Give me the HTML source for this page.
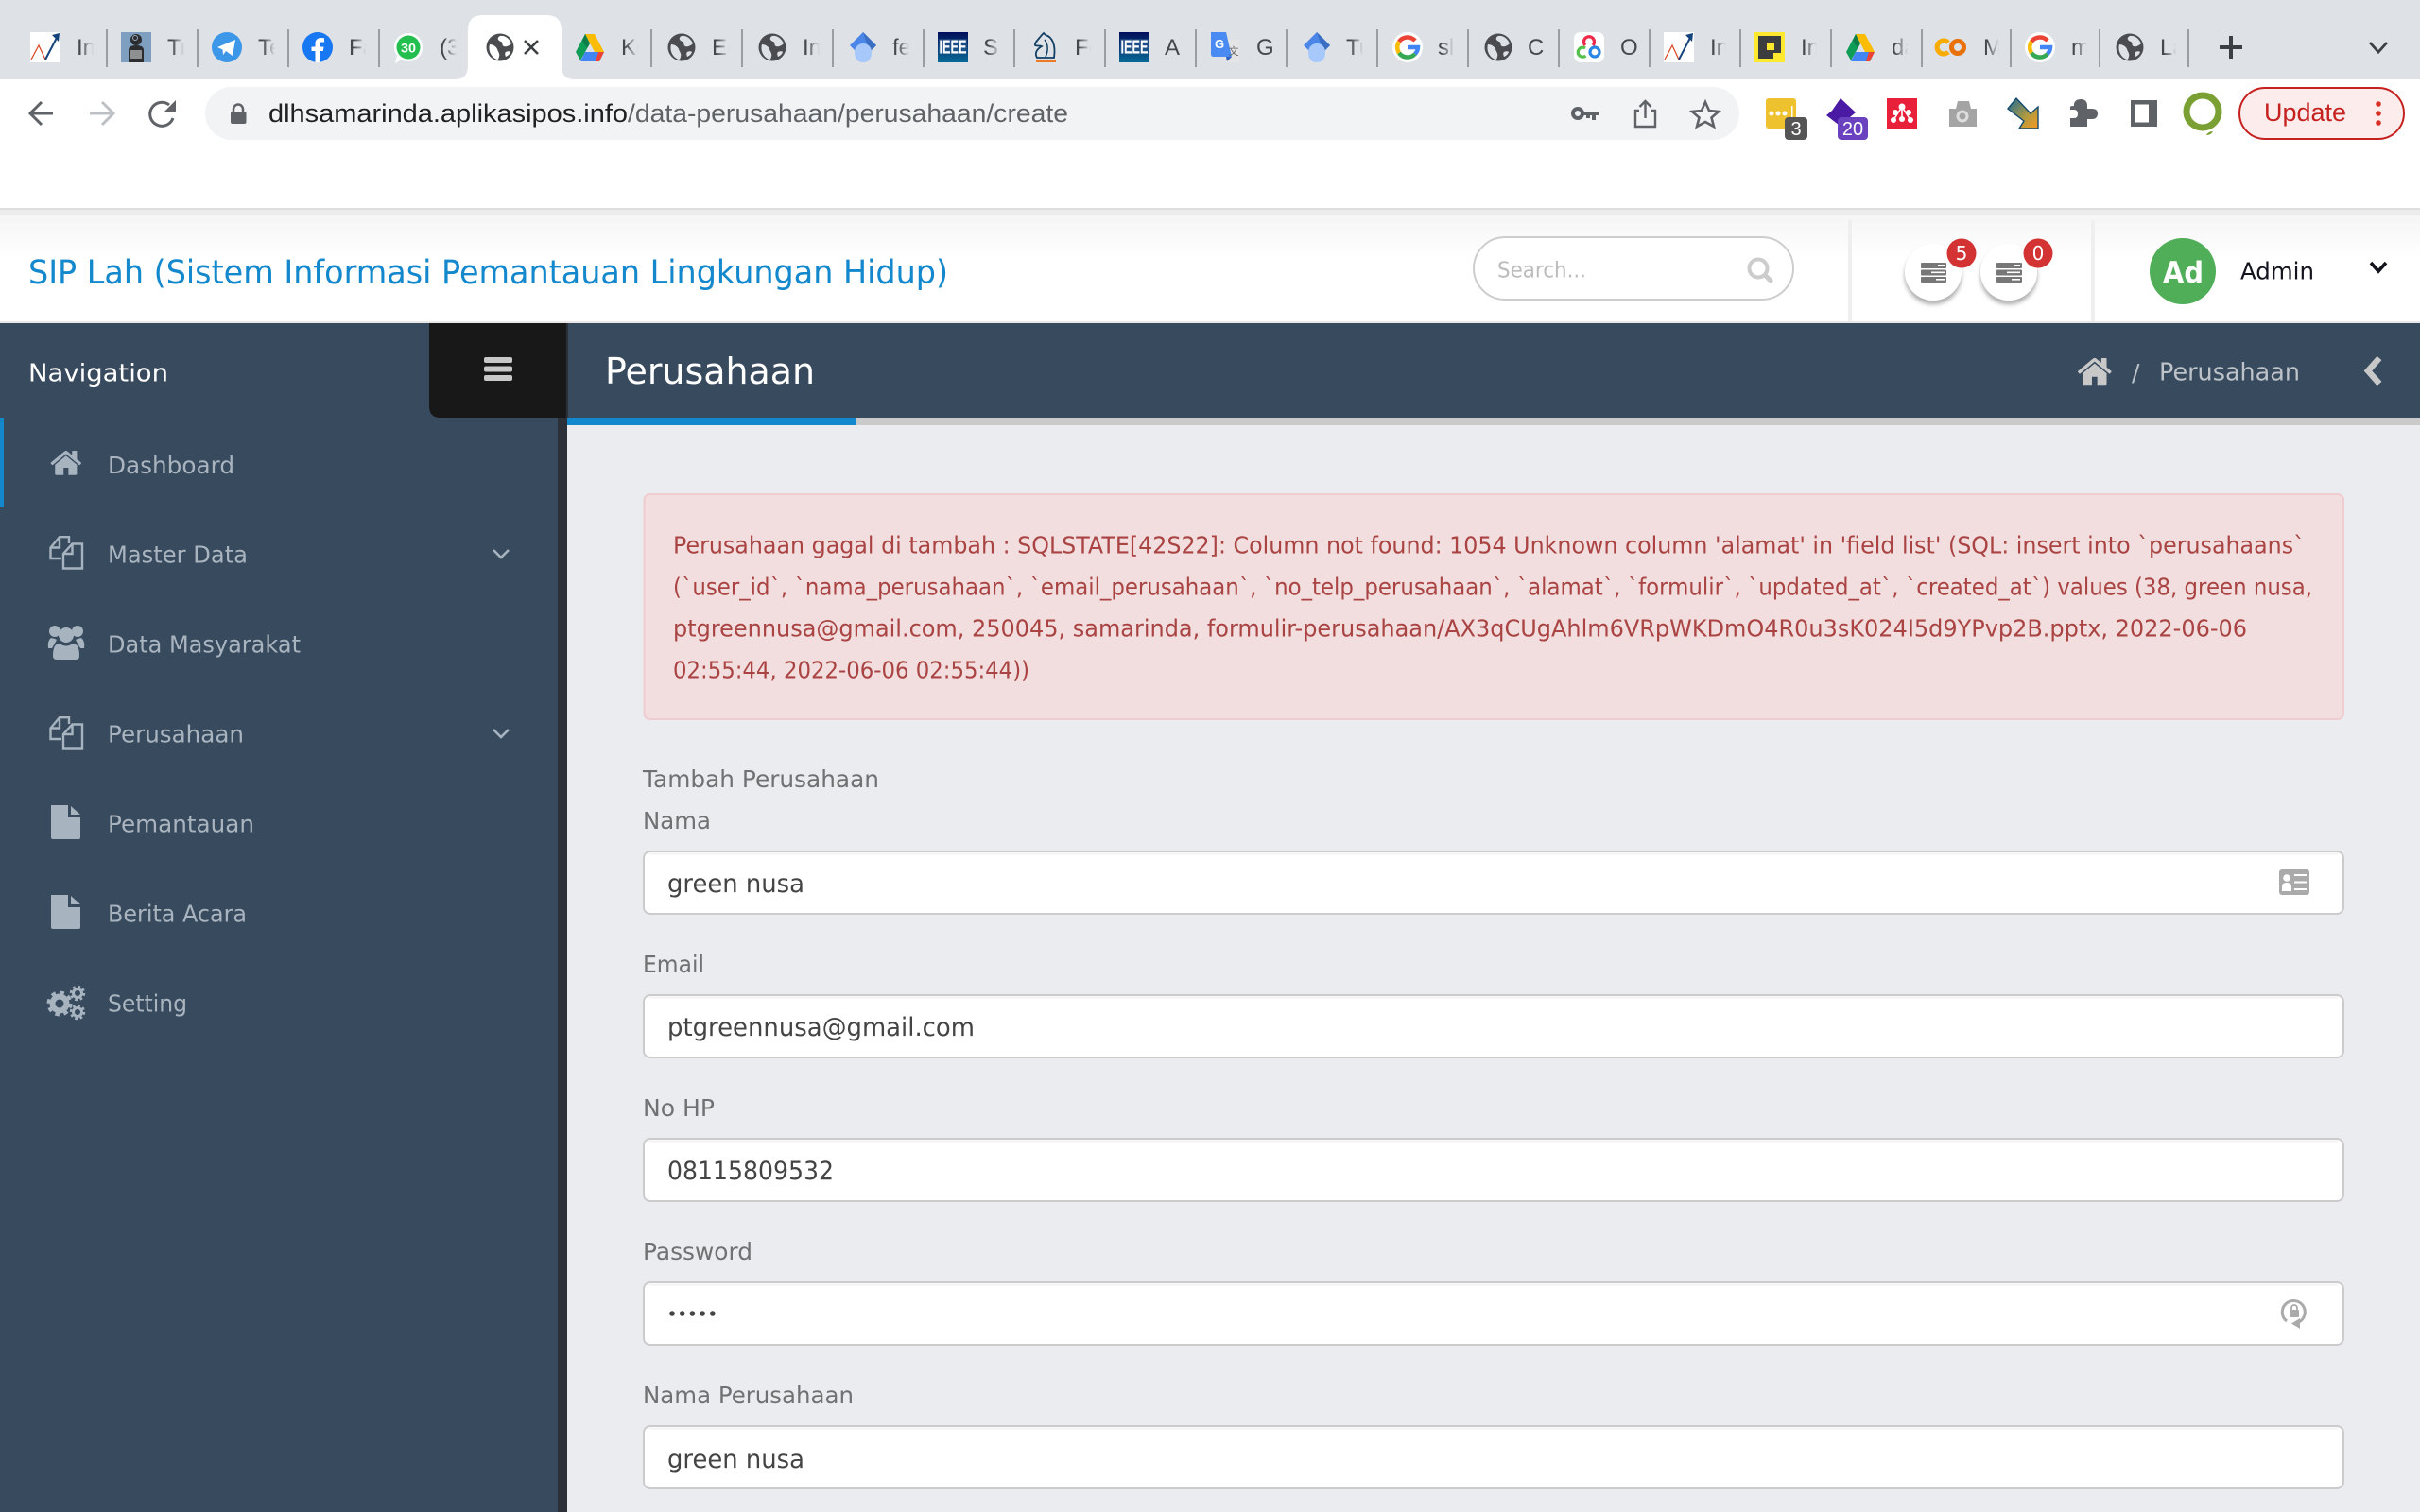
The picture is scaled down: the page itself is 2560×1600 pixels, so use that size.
<!DOCTYPE html>
<html lang="id"><head><meta charset="utf-8"><title>SIP Lah</title>
<style>html,body{margin:0;padding:0;background:#ebecf0;overflow:hidden}svg{display:block}
.c{font-family:"Liberation Sans",sans-serif}
.p{font-family:"DejaVu Sans","Liberation Sans",sans-serif}
.t{font-family:"Liberation Sans",sans-serif;font-size:24px;fill:#45494e}
.n{font-family:"DejaVu Sans","Liberation Sans",sans-serif;font-size:24.5px;fill:#a9b4bf}
.l{font-family:"DejaVu Sans","Liberation Sans",sans-serif;font-size:25px;fill:#707172}
.v{font-family:"DejaVu Sans","Liberation Sans",sans-serif;font-size:27px;fill:#444}
.e{font-family:"DejaVu Sans","Liberation Sans",sans-serif;font-size:25px;fill:#a94442}
</style></head><body>
<svg xmlns="http://www.w3.org/2000/svg" width="2560" height="1600" viewBox="0 0 2560 1600">
<defs>
<linearGradient id="hg" x1="0" y1="0" x2="0" y2="1"><stop offset="0" stop-color="#f5f5f5"/><stop offset="1" stop-color="#fff"/></linearGradient>
<linearGradient id="fade" x1="0" y1="0" x2="1" y2="0"><stop offset="0" stop-color="#dee1e6" stop-opacity="0"/><stop offset=".5" stop-color="#dee1e6"/><stop offset="1" stop-color="#dee1e6"/></linearGradient>
<linearGradient id="ie" x1="0" y1="0" x2="0" y2="1"><stop offset="0" stop-color="#020f5a"/><stop offset="1" stop-color="#0a6a96"/></linearGradient>
<linearGradient id="ar" x1="0" y1="0" x2="1" y2="1"><stop offset="0" stop-color="#1b6a96"/><stop offset=".6" stop-color="#b09a40"/><stop offset="1" stop-color="#f79a20"/></linearGradient>
<filter id="sh" x="-30%" y="-30%" width="160%" height="170%"><feDropShadow dx="0" dy="4" stdDeviation="2.5" flood-color="#888" flood-opacity=".7"/></filter>
<g id="globe"><circle cx="15" cy="16" r="14.5" fill="#4a4c50"/><path d="M15 4C11 6 13 9 16 10C19 11 16 14 19 15C22 16 25 14 27 12C25 7 20 3 15 4Z M4 13C7 13 11 15 12 18C13 21 15 23 14 26C13.5 28 13 29 12 29C6 27 2 20 4 13Z" fill="#dee1e6"/><path d="M21 21C23 20 25 20 26 21C25 24 23 25 21 26C20 24 20 22 21 21Z" fill="#dee1e6"/></g>
<g id="chart"><rect width="32" height="32" fill="#fff"/><path d="M1 29L9 14L16 29" fill="none" stroke="#d9451f" stroke-width="1.2"/><path d="M16 29L29 4" fill="none" stroke="#15437c" stroke-width="2"/><path d="M23 3L31 1L30 10Z" fill="#15437c"/></g>
<g id="ml"><rect width="32" height="32" fill="#7e9fbf"/><circle cx="16" cy="8" r="6" fill="#2b2d30"/><path d="M8 32V19Q8 14 16 14Q24 14 24 19V32Z" fill="#2b2d30"/><circle cx="15" cy="6" r="2.5" fill="none" stroke="#9ab" stroke-width="1"/><rect x="10" y="19" width="12" height="9" fill="#bbb" opacity=".7"/></g>
<g id="tg"><circle cx="16" cy="16" r="16" fill="#3d97e8"/><path d="M6 16L25 8L22 25L15 20L12 24L11.5 18.5Z" fill="#fff"/></g>
<g id="fb"><circle cx="16" cy="16" r="16" fill="#1877f2"/><path d="M13.5 32V20H9.5V15.5H13.5V12C13.5 8 16 6 19.5 6L23 6.3V10.5H20.5C18.5 10.500 18 11.5 18 13V15.5H22.5L21.8 20H18V32Z" fill="#fff"/></g>
<g id="wa"><path d="M1 32L3 24Q0 20 0 15C0 6 7 0 15 0S30 6 30 15S23 30 15 30Q11 30 8 28Z" fill="#fff"/><circle cx="15" cy="15" r="12.5" fill="#23bf4e"/><text x="15" y="20.5" text-anchor="middle" font-family="Liberation Sans" font-weight="700" font-size="14" fill="#fff" textLength="16" lengthAdjust="spacingAndGlyphs">30</text></g>
<g id="drive"><path d="M10 1H20L30 20H20Z" fill="#fbbc04"/><path d="M10 1L0 20L5 29L15 11Z" fill="#0f9d58"/><path d="M10 1L15 11L12 16L7 8Z" fill="#0f7d48"/><path d="M5 30L10 20H30L25 30Z" fill="#4285f4"/><path d="M25 30L30 20H24L21 30Z" fill="#ea4335"/></g>
<g id="dia"><path d="M15 0L29 14L15 28L1 14Z" fill="#4a86e8"/><path d="M15 0L29 14L22 21Z" fill="#3a6fc4"/><path d="M6 21A9 9 0 0 1 24 21Q24 32 15 32Q6 32 6 21Z" fill="#a7c8fb"/></g>
<g id="ieee"><rect width="32" height="32" fill="url(#ie)"/><rect x="1" y="7" width="30" height="16" fill="#2e5f96" opacity=".55"/><text x="16" y="22.5" text-anchor="middle" font-family="Liberation Sans" font-weight="700" font-size="20" fill="#fff" textLength="29" lengthAdjust="spacingAndGlyphs">IEEE</text></g>
<g id="horse"><path d="M6 27C3 22 6 18 11 15C9 14 6 15 4 14C3 11 9 6 11 3L13 1L15 3C22 5 26 13 24 27Z" fill="none" stroke="#123f63" stroke-width="1.8"/><path d="M14 8C18 13 18 20 15 26" fill="none" stroke="#123f63" stroke-width="1.5"/><rect x="5" y="29" width="21" height="3" fill="#ec7a26"/></g>
<g id="gt"><path d="M14 8H30V32H14Z" fill="#e5e5e5"/><path d="M0 0H16L22 26H3Q0 26 0 23Z" fill="#4a8af3"/><path d="M16 26H22L17 31Z" fill="#2b5fc0"/><text x="9" y="17" text-anchor="middle" font-family="Liberation Sans" font-weight="700" font-size="13" fill="#fff">G</text><text x="24" y="24" text-anchor="middle" font-family="Noto Sans CJK SC,sans-serif" font-size="11" fill="#666">文</text></g>
<g id="goog"><circle cx="16" cy="16" r="16" fill="#fff"/><path d="M24 9A11 11 0 0 0 7 10" fill="none" stroke="#ea4335" stroke-width="4.5"/><path d="M7 10A11 11 0 0 0 7 22" fill="none" stroke="#fbbc05" stroke-width="4.5"/><path d="M7 22A11 11 0 0 0 24 23" fill="none" stroke="#34a853" stroke-width="4.5"/><path d="M24 23A11 11 0 0 0 27 16H16" fill="none" stroke="#4285f4" stroke-width="4.5"/></g>
<g id="cvs"><rect width="32" height="32" rx="7" fill="#fff"/><path d="M12 14A5.5 5.5 0 1 1 20 14" fill="none" stroke="#ee2a4a" stroke-width="3.2"/><path d="M13 17A5 5 0 1 0 13.5 25" fill="none" stroke="#55c14a" stroke-width="3.2" transform="translate(-1,0)"/><circle cx="22" cy="21" r="5" fill="none" stroke="#2a86e6" stroke-width="3.2"/></g>
<g id="yel"><rect width="32" height="32" fill="#ffe92e"/><path d="M4 4H28V22H20V28H4Z" fill="#3b3d3f"/><rect x="13" y="11" width="8" height="8" fill="#ffe92e"/></g>
<g id="co"><path d="M14 11A7 7 0 1 0 14 21" fill="none" stroke="#f9ab00" stroke-width="5"/><circle cx="24" cy="16" r="6.5" fill="none" stroke="#e8710a" stroke-width="5"/></g>
<path id="fah" d="M1472 992v480q0 26-19 45t-45 19h-384v-384h-256v384h-384q-26 0-45-19t-19-45v-480q0-1 .5-3t.5-3l575-474 575 474q1 2 1 6zm223-69l-62 74q-8 9-21 11h-3q-13 0-21-7l-692-577-692 577q-12 8-24 7-13-2-21-11l-62-74q-8-10-7-23.5t11-21.5l719-599q32-26 76-26t76 26l244 204v-195q0-14 9-23t23-9h192q14 0 23 9t9 23v408l219 182q10 8 11 21.5t-7 23.5z"/>
<g id="files" fill="none" stroke="#a7b3bf" stroke-width="2.4"><path d="M13 24H1.5V12.5L11 1.2H21V8"/><path d="M11 1.5V12.5H1.5"/><path d="M15 34.5V19L24.5 8.5H35V34.5Z"/><path d="M24.5 8.5V19H15"/></g>
<g id="file" fill="#a7b3bf"><path d="M0 0H18V13H31V34.5Q31 36 29 36H2Q0 36 0 34Z"/><path d="M21 1L31 10H21Z"/></g>
<g id="srv" fill="#777"><rect width="27" height="6" rx="1"/><rect y="7.5" width="27" height="6" rx="1"/><rect y="15" width="27" height="6" rx="1"/><rect x="18" y="2" width="7" height="1.6" fill="#fff"/><rect x="11" y="9.5" width="14" height="1.6" fill="#fff"/><rect x="16" y="17" width="9" height="1.6" fill="#fff"/></g>
<rect id="fd" width="26" height="30" fill="url(#fade)"/>
<g id="inp"><rect x="0" y="0" width="1798" height="66" rx="7" fill="#fff" stroke="#cbcbcb" stroke-width="2"/><rect x="6" y="1.5" width="1786" height="2" fill="#f3f3f3"/></g>
</defs>

<!-- page background -->
<rect width="2560" height="1600" fill="#ebecf0"/>

<!-- browser: tab strip -->
<rect width="2560" height="84" fill="#dee1e6"/>
<rect y="84" width="2560" height="136" fill="#fff"/>
<use href="#chart" x="32" y="34"/><use href="#ml" x="128" y="34"/><use href="#tg" x="224" y="34"/><use href="#fb" x="320" y="34"/><use href="#wa" x="417" y="35"/>
<use href="#drive" x="609" y="35"/><use href="#globe" x="706" y="34"/><use href="#globe" x="802" y="34"/><use href="#dia" x="898" y="34"/><use href="#ieee" x="992" y="34"/><use href="#horse" x="1091" y="34"/><use href="#ieee" x="1184" y="34"/><use href="#gt" x="1281" y="34"/><use href="#dia" x="1378" y="34"/><use href="#goog" x="1473" y="34"/><use href="#globe" x="1570" y="34"/><use href="#cvs" x="1665" y="34"/><use href="#chart" x="1760" y="34"/><use href="#yel" x="1856" y="34"/><use href="#drive" x="1953" y="35"/><use href="#co" x="2047" y="34"/><use href="#goog" x="2142" y="34"/><use href="#globe" x="2238" y="34"/>
<g class="t">
<text class="t" x="81" y="58">In</text><text class="t" x="177" y="58">Tr</text><text class="t" x="273" y="58">Te</text><text class="t" x="369" y="58">Fa</text><text class="t" x="465" y="58">(3</text>
<text class="t" x="657" y="58">Ke</text><text class="t" x="753" y="58">Ed</text><text class="t" x="849" y="58">In</text><text class="t" x="944" y="58">fe</text><text class="t" x="1040" y="58">Su</text><text class="t" x="1137" y="58">Fo</text><text class="t" x="1232" y="58">A</text><text class="t" x="1329" y="58">G</text><text class="t" x="1424" y="58">Tu</text><text class="t" x="1521" y="58">sl</text><text class="t" x="1616" y="58">C</text><text class="t" x="1714" y="58">O</text><text class="t" x="1809" y="58">In</text><text class="t" x="1905" y="58">In</text><text class="t" x="2001" y="58">da</text><text class="t" x="2098" y="58">M</text><text class="t" x="2191" y="58">m</text><text class="t" x="2285" y="58">La</text>
</g>
<use href="#fd" x="86" y="36"/><use href="#fd" x="182" y="36"/><use href="#fd" x="278" y="36"/><use href="#fd" x="374" y="36"/><use href="#fd" x="470" y="36"/><use href="#fd" x="662" y="36"/><use href="#fd" x="758" y="36"/><use href="#fd" x="854" y="36"/><use href="#fd" x="949" y="36"/><use href="#fd" x="1045" y="36"/><use href="#fd" x="1141" y="36"/><use href="#fd" x="1429" y="36"/><use href="#fd" x="1525" y="36"/><use href="#fd" x="1813" y="36"/><use href="#fd" x="1909" y="36"/><use href="#fd" x="2005" y="36"/><use href="#fd" x="2102" y="36"/><use href="#fd" x="2195" y="36"/><use href="#fd" x="2289" y="36"/>
<g fill="#9a9ea3">
<rect x="112" y="31" width="2" height="40"/><rect x="208" y="31" width="2" height="40"/><rect x="304" y="31" width="2" height="40"/><rect x="400" y="31" width="2" height="40"/><rect x="688" y="31" width="2" height="40"/><rect x="784" y="31" width="2" height="40"/><rect x="880" y="31" width="2" height="40"/><rect x="976" y="31" width="2" height="40"/><rect x="1072" y="31" width="2" height="40"/><rect x="1168" y="31" width="2" height="40"/><rect x="1264" y="31" width="2" height="40"/><rect x="1360" y="31" width="2" height="40"/><rect x="1456" y="31" width="2" height="40"/><rect x="1552" y="31" width="2" height="40"/><rect x="1648" y="31" width="2" height="40"/><rect x="1744" y="31" width="2" height="40"/><rect x="1840" y="31" width="2" height="40"/><rect x="1936" y="31" width="2" height="40"/><rect x="2032" y="31" width="2" height="40"/><rect x="2126" y="31" width="2" height="40"/><rect x="2220" y="31" width="2" height="40"/><rect x="2314" y="31" width="2" height="40"/>
</g>
<path d="M481 84Q495 84 495 70V32Q495 16 511 16H578Q594 16 594 32V70Q594 84 608 84Z" fill="#fff"/>
<g transform="translate(514,34)"><circle cx="15" cy="16" r="14.5" fill="#4a4c50"/><path d="M15 4C11 6 13 9 16 10C19 11 16 14 19 15C22 16 25 14 27 12C25 7 20 3 15 4Z M4 13C7 13 11 15 12 18C13 21 15 23 14 26C13.5 28 13 29 12 29C6 27 2 20 4 13Z M21 21C23 20 25 20 26 21C25 24 23 25 21 26C20 24 20 22 21 21Z" fill="#fff"/></g>
<path d="M555 43L569 57M569 43L555 57" stroke="#3c4043" stroke-width="2.6" fill="none"/>
<path d="M2360 38V62M2348 50H2372" stroke="#3c4043" stroke-width="4" fill="none"/>
<path d="M2507 45L2516 55L2525 45" stroke="#3c4043" stroke-width="2.8" fill="none"/>

<!-- toolbar -->
<path d="M56 120H33M44 108L32 120L44 132" fill="none" stroke="#5f6368" stroke-width="3"/>
<path d="M95 120H119M108 108L120 120L108 132" fill="none" stroke="#bdc1c6" stroke-width="3"/>
<path d="M183 125A12.5 12.5 0 1 1 179 111" fill="none" stroke="#5f6368" stroke-width="3"/><path d="M186 106V118H174Z" fill="#5f6368"/>
<rect x="217" y="92" width="1623" height="56" rx="28" fill="#f1f3f4"/>
<path d="M247 118V115.5A5 5 0 0 1 257 115.5V118" fill="none" stroke="#5f6368" stroke-width="2.5"/><rect x="244" y="118" width="16.5" height="13" rx="2" fill="#5f6368"/>
<text class="c" x="284" y="129" font-size="27" fill="#202124" textLength="380" lengthAdjust="spacingAndGlyphs">dlhsamarinda.aplikasipos.info</text>
<text class="c" x="664" y="129" font-size="27" fill="#5f6368" textLength="466" lengthAdjust="spacingAndGlyphs">/data-perusahaan/perusahaan/create</text>
<circle cx="1669" cy="120" r="5" fill="none" stroke="#5f6368" stroke-width="4"/><path d="M1674 118H1691V122H1688V127H1684V122H1682V125H1678V122H1674Z" fill="#5f6368"/>
<path d="M1734 117H1730V134H1751V117H1747M1740.5 125V108M1734.5 113L1740.5 107L1746.5 113" fill="none" stroke="#5f6368" stroke-width="2.4"/>
<path d="M1804 108L1808 117L1818 118L1810.5 124.5L1813 134L1804 129L1795 134L1797.5 124.5L1790 118L1800 117Z" fill="none" stroke="#5f6368" stroke-width="2.6"/>
<rect x="1868" y="104" width="32" height="32" rx="3" fill="#eec22e"/><circle cx="1874" cy="120" r="2.5" fill="#fff"/><circle cx="1881" cy="120" r="2.5" fill="#fff"/><circle cx="1888" cy="120" r="2.5" fill="#fff"/><rect x="1895" y="112" width="1.5" height="14" fill="#fff"/>
<rect x="1888" y="124" width="24" height="24" rx="4" fill="#555"/><text class="c" x="1900" y="143" text-anchor="middle" font-size="20" fill="#fff">3</text>
<path d="M1947 104L1963 119L1957 124L1961 130L1950 136L1932 122L1938 117Z" fill="#4a1aa5"/>
<rect x="1944" y="124" width="32" height="24" rx="4" fill="#6a42c0"/><text class="c" x="1960" y="143" text-anchor="middle" font-size="20" fill="#fff">20</text>
<rect x="1996" y="104" width="32" height="32" fill="#e8203a"/><g fill="#fff"><circle cx="2012" cy="113" r="3.5"/><circle cx="2005" cy="119" r="3"/><circle cx="2019" cy="119" r="3"/><circle cx="2003" cy="127" r="3"/><circle cx="2021" cy="127" r="3"/><circle cx="2012" cy="126" r="3"/></g><path d="M2012 113L2003 127M2012 113L2021 127M2012 113V126" stroke="#fff" stroke-width="1.6" fill="none"/>
<path d="M2062 115H2069L2071 107H2083L2085 115H2091V134H2062Z" fill="#a4a4a4"/><circle cx="2076" cy="123" r="6.5" fill="#ddd"/><circle cx="2076" cy="123" r="3.5" fill="#a4a4a4"/>
<path d="M2124 115L2133 104L2148 120L2156 113V136H2136L2141 128Z" fill="url(#ar)" stroke="#154a6e" stroke-width="1.4"/>
<path d="M2201 105Q2208 105 2208 112V115H2213Q2219 115 2219 120Q2219 126 2213 126H2208V134H2190V125H2194Q2198 125 2198 120.5Q2198 116 2194 116H2190V113Q2190 112 2194 112V110Q2195 105 2201 105Z" fill="#5f6368"/>
<rect x="2254" y="106" width="28" height="28" fill="#5f6368"/><rect x="2258.5" y="110.5" width="14.5" height="19" fill="#fff"/>
<circle cx="2330" cy="118" r="17" fill="none" stroke="#7aa033" stroke-width="7"/><path d="M2334 143Q2336 139 2341 139Q2339 143 2334 143Z" fill="#7aa033"/>
<rect x="2369" y="93" width="174" height="54" rx="27" fill="#fcecec" stroke="#c5221f" stroke-width="2"/>
<text class="c" x="2395" y="128" font-size="27" fill="#c5221f" textLength="87" lengthAdjust="spacingAndGlyphs">Update</text>
<circle cx="2516" cy="110" r="2.8" fill="#d93025"/><circle cx="2516" cy="120" r="2.8" fill="#d93025"/><circle cx="2516" cy="130" r="2.8" fill="#d93025"/>

<!-- app header -->
<rect y="220" width="2560" height="2" fill="#dedede"/>
<rect y="222" width="2560" height="6" fill="#ececec"/>
<rect y="228" width="2560" height="44" fill="url(#hg)"/>
<rect y="272" width="2560" height="68" fill="#fff"/>
<rect y="340" width="2560" height="2" fill="#e8e8e8"/>
<text class="p" x="30" y="300" font-size="35" fill="#1388cc" textLength="973" lengthAdjust="spacingAndGlyphs">SIP Lah (Sistem Informasi Pemantauan Lingkungan Hidup)</text>
<rect x="1559" y="251" width="338" height="66" rx="33" fill="#fff" stroke="#cdcdcd" stroke-width="2"/>
<text class="p" x="1584" y="293.5" font-size="23.5" fill="#bcbcbc" textLength="94" lengthAdjust="spacingAndGlyphs">Search...</text>
<circle cx="1860" cy="284" r="9.5" fill="none" stroke="#ccc" stroke-width="4"/><path d="M1867 291L1873 297" stroke="#ccc" stroke-width="5" stroke-linecap="round"/>
<rect x="1955" y="233" width="4" height="107" fill="#efefef"/><rect x="2212" y="233" width="4" height="107" fill="#efefef"/>
<circle cx="2045" cy="288" r="30" fill="#fff" filter="url(#sh)"/><circle cx="2125" cy="288" r="30" fill="#fff" filter="url(#sh)"/>
<use href="#srv" x="2032" y="278"/><use href="#srv" x="2112" y="278"/>
<circle cx="2075" cy="268" r="15.5" fill="#d33333"/><circle cx="2156" cy="268" r="15.5" fill="#d33333"/>
<text class="p" x="2075" y="275" font-size="20" fill="#fff" text-anchor="middle">5</text><text class="p" x="2156" y="275" font-size="20" fill="#fff" text-anchor="middle">0</text>
<circle cx="2309" cy="287" r="35" fill="#50ae58"/>
<text class="p" x="2288" y="299" font-size="31" font-weight="700" fill="#fff" textLength="43" lengthAdjust="spacingAndGlyphs">Ad</text>
<text class="p" x="2370" y="295.5" font-size="25" fill="#14141e" textLength="78" lengthAdjust="spacingAndGlyphs">Admin</text>
<path d="M2508 278L2516 287L2524 278" fill="none" stroke="#14141e" stroke-width="3.6"/>

<!-- page bar -->
<rect y="342" width="2560" height="100" fill="#374a5e"/>
<rect x="600" y="442" width="1960" height="8" fill="#cacaca"/>
<rect x="600" y="442" width="306" height="8" fill="#1388cc"/>
<rect y="442" width="590" height="1158" fill="#374a5e"/>
<rect x="590" y="442" width="10" height="1158" fill="#2c3038"/>
<path d="M454 342H600V442H466Q454 442 454 430Z" fill="#181818"/>
<rect x="599" y="342" width="2" height="100" fill="#2c3038"/>
<rect x="512" y="378" width="30" height="6" rx="2" fill="#c8c8c8"/><rect x="512" y="387.5" width="30" height="6" rx="2" fill="#c8c8c8"/><rect x="512" y="397" width="30" height="6" rx="2" fill="#c8c8c8"/>
<text class="p" x="30" y="403.5" font-size="25.5" fill="#fff" textLength="148" lengthAdjust="spacingAndGlyphs">Navigation</text>
<text class="p" x="640" y="406" font-size="38.5" fill="#fff" textLength="222" lengthAdjust="spacingAndGlyphs">Perusahaan</text>
<use href="#fah" transform="translate(2196,373.3) scale(.0221)" fill="#c8c8c8"/>
<text class="p" x="2255" y="403" font-size="25" fill="#bdc3c8">/</text>
<text class="p" x="2284" y="402.5" font-size="25.5" fill="#bdc3c8" textLength="149" lengthAdjust="spacingAndGlyphs">Perusahaan</text>
<path d="M2517 379L2505 392.5L2517 406" fill="none" stroke="#c8c8c8" stroke-width="6.5"/>

<!-- sidebar -->
<rect x="0" y="442" width="4" height="95" fill="#1388cc"/>
<use href="#fah" transform="translate(51.8,471.9) scale(.0201)" fill="#a7b3bf"/>
<use href="#files" x="52" y="567"/>
<g fill="#a7b3bf"><circle cx="70" cy="672" r="8"/><path d="M56 694Q56 681 63 681Q70 686 77 681Q84 681 84 694Q84 698 80 698H60Q56 698 56 694Z"/><circle cx="58" cy="668" r="6"/><circle cx="82" cy="668" r="6"/><path d="M58 676L60 677Q58 681 55 686H51Q50 678 54 675Z"/><path d="M82 676L80 677Q82 681 85 686H89Q90 678 86 675Z"/></g>
<use href="#files" x="52" y="758"/>
<use href="#file" x="54" y="852"/><use href="#file" x="54" y="947"/>
<g fill="none" stroke="#a7b3bf"><circle cx="63" cy="1062" r="7.5" stroke-width="6"/><circle cx="63" cy="1062" r="11.5" stroke-width="4" stroke-dasharray="4.5 4.53"/><circle cx="82" cy="1051" r="4.5" stroke-width="3"/><circle cx="82" cy="1051" r="7" stroke-width="2.5" stroke-dasharray="2.75 2.75"/><circle cx="82" cy="1071" r="4.5" stroke-width="3"/><circle cx="82" cy="1071" r="7" stroke-width="2.5" stroke-dasharray="2.75 2.75"/></g>
<text class="n" x="114" y="501" textLength="134" lengthAdjust="spacingAndGlyphs">Dashboard</text>
<text class="n" x="114" y="595.5" textLength="148" lengthAdjust="spacingAndGlyphs">Master Data</text>
<text class="n" x="114" y="690.5" textLength="204" lengthAdjust="spacingAndGlyphs">Data Masyarakat</text>
<text class="n" x="114" y="785.5" textLength="144" lengthAdjust="spacingAndGlyphs">Perusahaan</text>
<text class="n" x="114" y="880.5" textLength="155" lengthAdjust="spacingAndGlyphs">Pemantauan</text>
<text class="n" x="114" y="975.5" textLength="147" lengthAdjust="spacingAndGlyphs">Berita Acara</text>
<text class="n" x="114" y="1070.5" textLength="84" lengthAdjust="spacingAndGlyphs">Setting</text>
<path d="M522 582L530 590L538 582" fill="none" stroke="#a7b3bf" stroke-width="2.6"/>
<path d="M522 772L530 780L538 772" fill="none" stroke="#a7b3bf" stroke-width="2.6"/>

<!-- alert -->
<rect x="681.5" y="523" width="1797.5" height="238" rx="6" fill="#f2dddf" stroke="#efccd0" stroke-width="2"/>
<text class="e" x="712" y="585.5" textLength="1726" lengthAdjust="spacingAndGlyphs">Perusahaan gagal di tambah : SQLSTATE[42S22]: Column not found: 1054 Unknown column 'alamat' in 'field list' (SQL: insert into `perusahaans`</text>
<text class="e" x="712" y="629.5" textLength="1734" lengthAdjust="spacingAndGlyphs">(`user_id`, `nama_perusahaan`, `email_perusahaan`, `no_telp_perusahaan`, `alamat`, `formulir`, `updated_at`, `created_at`) values (38, green nusa,</text>
<text class="e" x="712" y="673.5" textLength="1665" lengthAdjust="spacingAndGlyphs">ptgreennusa@gmail.com, 250045, samarinda, formulir-perusahaan/AX3qCUgAhlm6VRpWKDmO4R0u3sK024I5d9YPvp2B.pptx, 2022-06-06</text>
<text class="e" x="712" y="717.5" textLength="377" lengthAdjust="spacingAndGlyphs">02:55:44, 2022-06-06 02:55:44))</text>

<!-- form -->
<text class="l" x="680" y="833" textLength="250" lengthAdjust="spacingAndGlyphs">Tambah Perusahaan</text>
<text class="l" x="680" y="877" textLength="72" lengthAdjust="spacingAndGlyphs">Nama</text>
<use href="#inp" x="681" y="901"/>
<text class="v" x="706" y="944" textLength="145" lengthAdjust="spacingAndGlyphs">green nusa</text>
<text class="l" x="680" y="1029" textLength="65" lengthAdjust="spacingAndGlyphs">Email</text>
<use href="#inp" x="681" y="1053"/>
<text class="v" x="706" y="1096" textLength="325" lengthAdjust="spacingAndGlyphs">ptgreennusa@gmail.com</text>
<text class="l" x="680" y="1181" textLength="76" lengthAdjust="spacingAndGlyphs">No HP</text>
<use href="#inp" x="681" y="1205"/>
<text class="v" x="706" y="1248" textLength="176" lengthAdjust="spacingAndGlyphs">08115809532</text>
<text class="l" x="680" y="1333" textLength="116" lengthAdjust="spacingAndGlyphs">Password</text>
<use href="#inp" x="681" y="1357"/>
<g fill="#444"><circle cx="711" cy="1390" r="2.8"/><circle cx="721.7" cy="1390" r="2.8"/><circle cx="732.4" cy="1390" r="2.8"/><circle cx="743.1" cy="1390" r="2.8"/><circle cx="753.8" cy="1390" r="2.8"/></g>
<text class="l" x="680" y="1485" textLength="223" lengthAdjust="spacingAndGlyphs">Nama Perusahaan</text>
<use href="#inp" x="681" y="1509"/>
<text class="v" x="706" y="1553" textLength="145" lengthAdjust="spacingAndGlyphs">green nusa</text>
<rect x="2411" y="920" width="32" height="27" rx="3" fill="#aaa"/>
<circle cx="2419" cy="929" r="3.8" fill="#fff"/><path d="M2414 943V938Q2414 934 2419 934Q2424 934 2424 938V943Z" fill="#fff"/>
<rect x="2427" y="925" width="13" height="2" fill="#fff"/><rect x="2427" y="932.5" width="13" height="2" fill="#fff"/><rect x="2427" y="940" width="13" height="2" fill="#fff"/>
<path d="M2419 1398A12 12 0 1 1 2431 1399.5" fill="none" stroke="#aaa" stroke-width="3"/>
<path d="M2433 1395V1406L2424 1400.5Z" fill="#aaa"/>
<rect x="2422" y="1386" width="10" height="8" rx="1" fill="#aaa"/><path d="M2424 1386V1384A3 3 0 0 1 2430 1384V1386" fill="none" stroke="#aaa" stroke-width="1.8"/>
</svg>
</body></html>
